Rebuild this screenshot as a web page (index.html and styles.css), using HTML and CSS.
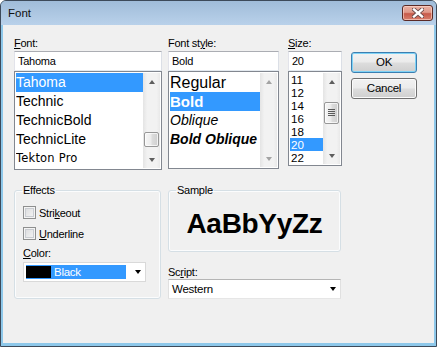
FILE: index.html
```html
<!DOCTYPE html>
<html>
<head>
<meta charset="utf-8">
<link rel="stylesheet" href="styles.css">
</head>
<body>
<div class="window">
  <div class="titlebar">
    <span class="title">Font</span>
    <div class="close">
      <svg width="12" height="10" viewBox="0 0 12 10">
        <path d="M2 1.5 L10 8.5 M10 1.5 L2 8.5" stroke="#6a4a4a" stroke-width="4.2" stroke-linecap="square"/>
        <path d="M2 1.5 L10 8.5 M10 1.5 L2 8.5" stroke="#ffffff" stroke-width="2.4" stroke-linecap="square"/>
      </svg>
    </div>
  </div>
  <div class="client">
    <div class="top">
      <div class="col col-font">
        <div class="label"><u>F</u>ont:</div>
        <div class="input">Tahoma</div>
        <div class="list list-font">
          <div class="items">
            <div class="item sel">Tahoma</div>
            <div class="item">Technic</div>
            <div class="item">TechnicBold</div>
            <div class="item">TechnicLite</div>
            <div class="item tekton">Tekton Pro</div>
          </div>
          <div class="scrollbar">
            <div class="sb-btn"><span class="tri-up"></span></div>
            <div class="track"><div class="thumb thumb-font"></div></div>
            <div class="sb-btn"><span class="tri-down"></span></div>
          </div>
        </div>
      </div>
      <div class="col col-style">
        <div class="label">Font st<u>y</u>le:</div>
        <div class="input">Bold</div>
        <div class="list list-style">
          <div class="items">
            <div class="item st-regular">Regular</div>
            <div class="item sel st-bold">Bold</div>
            <div class="item st-oblique">Oblique</div>
            <div class="item st-boldoblique">Bold Oblique</div>
          </div>
          <div class="scrollbar disabled">
            <div class="sb-btn"><span class="tri-up"></span></div>
            <div class="track"></div>
            <div class="sb-btn"><span class="tri-down"></span></div>
          </div>
        </div>
      </div>
      <div class="col col-size">
        <div class="label"><u>S</u>ize:</div>
        <div class="input">20</div>
        <div class="list list-size">
          <div class="items">
            <div class="item sz">11</div>
            <div class="item sz">12</div>
            <div class="item sz">14</div>
            <div class="item sz">16</div>
            <div class="item sz">18</div>
            <div class="item sz sel">20</div>
            <div class="item sz">22</div>
          </div>
          <div class="scrollbar">
            <div class="sb-btn"><span class="tri-up"></span></div>
            <div class="track"><div class="thumb thumb-size"><span class="grip"></span></div></div>
            <div class="sb-btn"><span class="tri-down"></span></div>
          </div>
        </div>
      </div>
      <div class="buttons">
        <div class="btn default">OK</div>
        <div class="btn">Cancel</div>
      </div>
    </div>
    <div class="bottom">
      <fieldset class="group effects">
        <legend>Effects</legend>
        <div class="effects-inner">
          <div class="check"><span class="box"></span><span>Stri<u>k</u>eout</span></div>
          <div class="check check2"><span class="box"></span><span><u>U</u>nderline</span></div>
          <div class="label color-label"><u>C</u>olor:</div>
          <div class="combo color-combo">
            <div class="color-sel"><span class="swatch"></span><span class="color-name">Black</span></div>
            <span class="tri-down dark"></span>
          </div>
        </div>
      </fieldset>
      <div class="right">
        <fieldset class="group sample">
          <legend>Sample</legend>
          <div class="sample-text">AaBbYyZz</div>
        </fieldset>
        <div class="label script-label">Sc<u>r</u>ipt:</div>
        <div class="combo script-combo">
          <span class="combo-text">Western</span>
          <span class="tri-down dark"></span>
        </div>
      </div>
    </div>
  </div>
</div>
</body>
</html>
```
FILE: styles.css
```css
html, body {
  margin: 0;
  padding: 0;
}
body {
  width: 437px;
  height: 347px;
  overflow: hidden;
  font-family: "Liberation Sans", Arial, sans-serif;
  font-size: 11px;
  letter-spacing: -0.25px;
  color: #000;
  background: #fff;
}
.window {
  width: 437px;
  height: 347px;
  box-sizing: border-box;
  border: 1px solid #3d4a5a;
  border-radius: 6px 6px 0 0;
  background: #8ec8ea;
  display: flex;
  flex-direction: column;
  overflow: hidden;
}
.titlebar {
  height: 24px;
  flex: none;
  display: flex;
  align-items: flex-start;
  padding-left: 7px;
  background: linear-gradient(#a0bcd9, #b9d1ea);
}
.title {
  font-size: 11.5px;
  letter-spacing: 0;
  align-self: center;
  color: #111;
}
.close {
  margin-left: auto;
  margin-right: 3px;
  margin-top: 4px;
  width: 31px;
  height: 16px;
  box-sizing: border-box;
  border: 1px solid #5b2a26;
  border-radius: 3px;
  background: linear-gradient(#eab0a2 0%, #e0998a 45%, #c75a4a 55%, #d77e6c 100%);
  box-shadow: inset 0 0 0 1px rgba(255,220,210,0.6);
  display: flex;
  align-items: center;
  justify-content: center;
}
.client {
  flex: 1;
  margin: 0 2px 3px 2px;
  background: #f0f0f0;
  padding: 11px 0 0 11px;
}
.top {
  display: flex;
  align-items: flex-start;
}
.col-font { width: 148px; }
.col-style { width: 111px; margin-left: 6px; }
.col-size { width: 54px; margin-left: 9px; }
.label {
  height: 14px;
  line-height: 14px;
  margin-bottom: 1px;
  white-space: nowrap;
}
.input {
  height: 20px;
  box-sizing: border-box;
  border: 1px solid;
  border-color: #abadb3 #dbdfe6 #e3e9ef #e2e3ea;
  background: #fff;
  padding-left: 3px;
  line-height: 18px;
}
.list {
  box-sizing: border-box;
  border: 1px solid #828790;
  background: #fff;
  padding: 1px;
  display: flex;
}
.list-font { height: 99px; }
.list-style { height: 98px; }
.list-size { height: 95px; }
.items {
  flex: 1;
  overflow: hidden;
}
.item {
  height: 19px;
  line-height: 19px;
  font-size: 14px;
  letter-spacing: 0;
  white-space: nowrap;
}
.item.sel {
  background: #3399ff;
  color: #fff;
}
.tekton {
  font-family: "DejaVu Sans", sans-serif;
  font-size: 11.5px;
  letter-spacing: 0.2px;
}
.st-regular { font-size: 16px; }
.st-bold { font-size: 15px; font-weight: bold; }
.st-oblique { font-size: 14px; font-style: italic; }
.st-boldoblique { font-size: 14px; font-weight: bold; font-style: italic; }
.item.sz {
  height: 13px;
  line-height: 13px;
  font-size: 11.6px;
  padding-left: 1px;
}
.scrollbar {
  width: 17px;
  flex: none;
  display: flex;
  flex-direction: column;
  background: linear-gradient(to right, #e4e4e4, #f2f2f2 25%, #f2f2f2 80%, #e9e9e9);
}
.sb-btn {
  height: 17px;
  flex: none;
  display: flex;
  align-items: center;
  justify-content: center;
}
.track {
  flex: 1;
}
.tri-up {
  width: 0;
  height: 0;
  border-left: 3.5px solid transparent;
  border-right: 3.5px solid transparent;
  border-bottom: 4px solid #5e5e5e;
}
.tri-down {
  width: 0;
  height: 0;
  border-left: 3.5px solid transparent;
  border-right: 3.5px solid transparent;
  border-top: 4px solid #5e5e5e;
}
.disabled .tri-up { border-bottom-color: #a3a3a3; }
.disabled .tri-down { border-top-color: #a3a3a3; }
.tri-down.dark { border-top-color: #000; }
.thumb {
  margin: 0 1px;
  box-sizing: border-box;
  border: 1px solid #979797;
  border-radius: 2px;
  background: linear-gradient(to right, #f6f6f6, #ececec 45%, #dcdcdc 55%, #cfcfcf);
  box-shadow: inset 0 0 0 1px rgba(255,255,255,0.7);
}
.thumb-font { margin-top: 42px; height: 15px; }
.thumb-size {
  margin-top: 12px;
  height: 22px;
  display: flex;
  align-items: center;
  justify-content: center;
}
.grip {
  width: 7px;
  height: 8px;
  background: repeating-linear-gradient(#5a5a5a 0, #5a5a5a 1px, transparent 1px, transparent 2px);
}
.buttons {
  width: 66px;
  margin-left: 9px;
  margin-top: 16px;
  display: flex;
  flex-direction: column;
  gap: 5px;
}
.btn {
  height: 21px;
  box-sizing: border-box;
  border: 1px solid #707070;
  border-radius: 3px;
  background: linear-gradient(#f2f2f2 0%, #ebebeb 48%, #dddddd 52%, #cfcfcf 100%);
  box-shadow: inset 0 0 0 1px #fbfbfb;
  text-align: center;
  line-height: 18px;
  font-size: 11.5px;
}
.btn.default {
  border-color: #3c7fb1;
  box-shadow: inset 0 0 0 1px #7fd3f6;
}
.bottom {
  display: flex;
  align-items: flex-start;
  margin-top: 13px;
}
.group {
  margin: 0;
  padding: 0;
  min-width: 0;
  box-sizing: border-box;
  border: 1px solid #d5dfe5;
  border-radius: 3px;
  box-shadow: inset 0 0 0 1px #fbfcfd;
}
.group legend {
  padding: 0 1px;
  margin-left: 7px;
  line-height: 14px;
  height: 14px;
}
.effects { width: 147px; }
.effects-inner {
  padding: 9px 0 16px 8px;
}
.check {
  display: flex;
  align-items: center;
  height: 13px;
  gap: 3px;
}
.check2 { margin-top: 8px; }
.box {
  width: 13px;
  height: 13px;
  box-sizing: border-box;
  border: 1px solid #8e8f8f;
  background: linear-gradient(135deg, #d8d9db, #f7f7f7);
  box-shadow: inset 0 0 0 1px #f4f4f4, inset 0 0 0 2px #c9ccd1;
}
.color-label { margin-top: 6px; margin-bottom: 2px; }
.combo {
  height: 20px;
  box-sizing: border-box;
  border: 1px solid #d9d9d9;
  background: #fff;
  display: flex;
  align-items: center;
}
.color-combo {
  width: 123px;
  padding: 2px;
}
.color-sel {
  width: 100px;
  height: 14px;
  background: #3399ff;
  display: flex;
  align-items: center;
}
.swatch {
  width: 25px;
  height: 12px;
  background: #000;
}
.color-name {
  color: #fff;
  margin-left: 3px;
  font-size: 11.5px;
}
.color-combo .tri-down { margin-left: auto; margin-right: 2px; }
.right {
  width: 173px;
  margin-left: 7px;
}
.sample { width: 173px; }
.sample-text {
  padding: 11px 0;
  line-height: 32px;
  height: 32px;
  text-align: center;
  font-size: 28px;
  font-weight: bold;
  letter-spacing: -0.3px;
}
.script-label { margin-top: 13px; margin-bottom: 0; }
.script-combo {
  width: 173px;
  border-color: #b5b5b5 #e0e0e0 #e6e6e6 #e0e0e0;
  padding-left: 3px;
}
.combo-text { font-size: 11.5px; }
.script-combo .tri-down { margin-left: auto; margin-right: 4px; }
```
